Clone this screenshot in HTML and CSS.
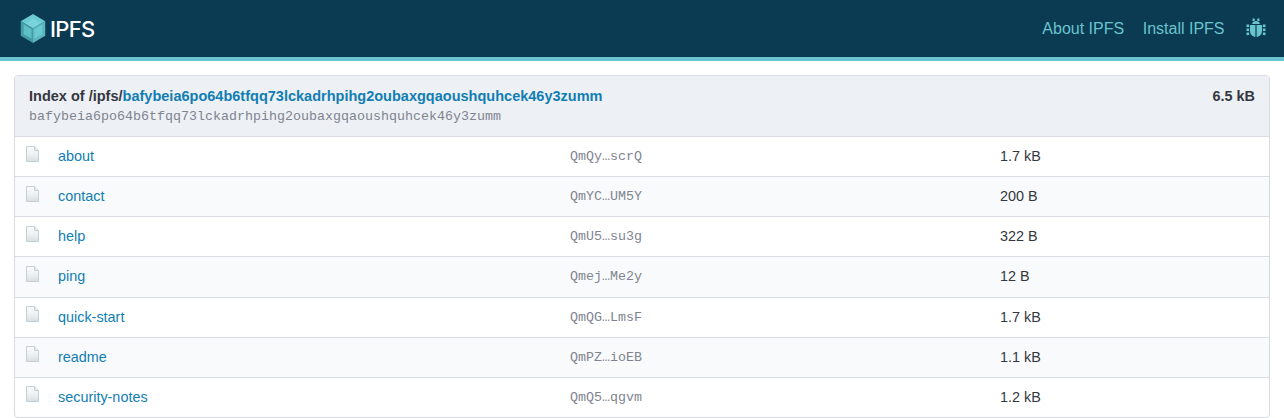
FILE: index.html
```html
<!DOCTYPE html>
<html lang="en">
<head>
<meta charset="utf-8">
<title>Index of /ipfs/</title>
<link rel="stylesheet" href="styles.css">
</head>
<body>
<header class="topbar">
  <a class="brand" href="#">
    <svg class="logo" viewBox="0 0 36 40" width="26" height="29" aria-hidden="true">
      <polygon points="18,0 35,10 18,20 1,10" fill="#6acad1"/>
      <polygon points="1,10 18,20 18,40 1,30" fill="#469ba3"/>
      <polygon points="35,10 18,20 18,40 35,30" fill="#5bb5bc"/>
      <polygon points="18,6 29,12.5 18,19 7,12.5" fill="#78d3da"/>
      <polygon points="5,14 16,21 16,34 5,28" fill="#5cc0c8"/>
      <polygon points="31,14 20,21 20,34 31,28" fill="#6acad1"/>
    </svg>
    <span class="brand-name">IPFS</span>
  </a>
  <nav class="nav">
    <a href="#">About IPFS</a>
    <a href="#">Install IPFS</a>
    <a class="bug" href="#" aria-label="Report a bug">
      <svg viewBox="0 0 20 20" width="20" height="20" aria-hidden="true">
        <g fill="#69c4cd">
          <rect x="6.500" y="0.500" width="2.200" height="2.500"/>
          <rect x="11.300" y="0.500" width="2.200" height="2.500"/>
          <path d="M6 6C6.500 4 8 3 10 3s3.500 1 4 3z"/>
          <path d="M4 7h5.400v12C6.300 18.700 4 16 4 13z"/>
          <path d="M16 7h-5.400v12c3.100-.3 5.400-3 5.400-6z"/>
          <rect x="0.500" y="6.500" width="2.600" height="2.600"/>
          <rect x="16.900" y="6.500" width="2.600" height="2.600"/>
          <rect x="0.500" y="10.500" width="2.600" height="2.600"/>
          <rect x="16.900" y="10.500" width="2.600" height="2.600"/>
          <rect x="0.500" y="14.500" width="2.600" height="2.600"/>
          <rect x="16.900" y="14.500" width="2.600" height="2.600"/>
        </g>
      </svg>
    </a>
  </nav>
</header>
<main class="page">
  <section class="card">
    <div class="card-head">
      <div class="head-main">
        <div class="head-title"><strong>Index of /ipfs/<a href="#">bafybeia6po64b6tfqq73lckadrhpihg2oubaxgqaoushquhcek46y3zumm</a></strong></div>
        <div class="head-cid">bafybeia6po64b6tfqq73lckadrhpihg2oubaxgqaoushquhcek46y3zumm</div>
      </div>
      <strong class="head-size">6.5 kB</strong>
    </div>
    <div class="row">
      <span class="file-cell"><svg class="file" viewBox="0 0 13 16" width="13" height="16" aria-hidden="true"><use href="#file"/></svg></span>
      <a class="name" href="#">about</a><span class="hash">QmQy…scrQ</span><span class="size">1.7 kB</span>
    </div>
    <div class="row alt">
      <span class="file-cell"><svg class="file" viewBox="0 0 13 16" width="13" height="16" aria-hidden="true"><use href="#file"/></svg></span>
      <a class="name" href="#">contact</a><span class="hash">QmYC…UM5Y</span><span class="size">200 B</span>
    </div>
    <div class="row">
      <span class="file-cell"><svg class="file" viewBox="0 0 13 16" width="13" height="16" aria-hidden="true"><use href="#file"/></svg></span>
      <a class="name" href="#">help</a><span class="hash">QmU5…su3g</span><span class="size">322 B</span>
    </div>
    <div class="row alt">
      <span class="file-cell"><svg class="file" viewBox="0 0 13 16" width="13" height="16" aria-hidden="true"><use href="#file"/></svg></span>
      <a class="name" href="#">ping</a><span class="hash">Qmej…Me2y</span><span class="size">12 B</span>
    </div>
    <div class="row">
      <span class="file-cell"><svg class="file" viewBox="0 0 13 16" width="13" height="16" aria-hidden="true"><use href="#file"/></svg></span>
      <a class="name" href="#">quick-start</a><span class="hash">QmQG…LmsF</span><span class="size">1.7 kB</span>
    </div>
    <div class="row alt">
      <span class="file-cell"><svg class="file" viewBox="0 0 13 16" width="13" height="16" aria-hidden="true"><use href="#file"/></svg></span>
      <a class="name" href="#">readme</a><span class="hash">QmPZ…ioEB</span><span class="size">1.1 kB</span>
    </div>
    <div class="row">
      <span class="file-cell"><svg class="file" viewBox="0 0 13 16" width="13" height="16" aria-hidden="true"><use href="#file"/></svg></span>
      <a class="name" href="#">security-notes</a><span class="hash">QmQ5…qgvm</span><span class="size">1.2 kB</span>
    </div>
  </section>
</main>
<svg class="defs" width="0" height="0" aria-hidden="true">
  <defs>
    <linearGradient id="fileFill" x1="0" y1="0" x2="0" y2="1">
      <stop offset="0" stop-color="#fbfcfc"/>
      <stop offset="0.5" stop-color="#eff2f2"/>
      <stop offset="1" stop-color="#d8dee1"/>
    </linearGradient>
    <g id="file">
      <path d="M.5.5H8.500L12.500 4.500V15.500H.5z" fill="url(#fileFill)" stroke="#c3cfd5"/>
      <path d="M8.500.5V4.500H12.500" fill="#e8ecee" stroke="#c3cfd5"/>
    </g>
  </defs>
</svg>
</body>
</html>
```
FILE: styles.css
```css
* { box-sizing: border-box; }

html, body { margin: 0; padding: 0; background: #fff; }

body {
  font-family: "Liberation Sans", Arial, sans-serif;
  font-size: 14.4px;
  color: #34373f;
  overflow: hidden;
}

a { text-decoration: none; color: #117eb3; }

.defs { display: block; }

.topbar {
  height: 61px;
  background: #0b3a53;
  border-bottom: 4px solid #69c4cd;
  display: flex;
  align-items: center;
  justify-content: space-between;
  padding: 0 18px 0 20px;
}

.brand { display: flex; align-items: center; gap: 4px; }
.logo { display: block; }
.brand-name {
  color: #fff;
  font-family: Inter, "Liberation Sans", sans-serif;
  font-size: 22px;
  font-weight: 500;
  letter-spacing: -0.7px;
}

.nav { display: flex; align-items: center; gap: 18.5px; font-size: 16px; }
.nav a { color: #69c4cd; }
.nav .bug { display: block; margin-left: 3px; height: 20px; margin-top: -2px; }

.page { padding: 14px 14px 0; }

.card {
  border: 1px solid #d9dbe2;
  border-radius: 4px;
  overflow: hidden;
}

.card-head {
  height: 61px;
  background: #edf0f4;
  border-bottom: 1px solid #d9dbe2;
  display: flex;
  justify-content: space-between;
  padding: 12px 14px 0 14px;
}

.head-title { line-height: 17px; font-size: 14.52px; }
.head-cid {
  margin-top: 4px;
  font-family: "Liberation Mono", monospace;
  font-size: 13.33px;
  line-height: 16px;
  color: #7f8491;
}
.head-size { line-height: 17px; }

.row {
  height: 40.15px;
  display: grid;
  grid-template-columns: 43px 512px 430px 1fr;
  align-items: center;
  border-bottom: 1px solid #d9dbe2;
}
.row:last-child { border-bottom: 0; height: 39.25px; }
.row.alt { background: #f9fafb; }

.file-cell { display: flex; padding-left: 11px; margin-top: -6px; }
.file { display: block; }

.name { color: #117eb3; line-height: 16px; margin-top: -1px; }
.hash {
  font-family: "Liberation Mono", monospace;
  font-size: 13.33px;
  color: #7f8491;
}
.size { color: #34373f; line-height: 16px; margin-top: -1px; }
```
